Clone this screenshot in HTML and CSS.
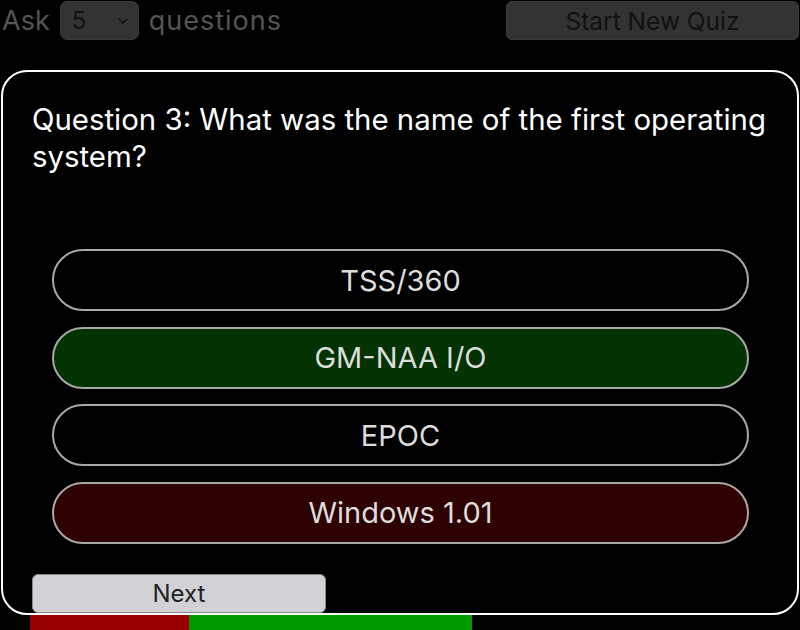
FILE: index.html
```html
<!DOCTYPE html>
<html>
<head>
<meta charset="utf-8">
<link rel="stylesheet" href="styles.css">
</head>
<body>
<div class="top">
  <div class="ask">
    <span>Ask</span>
    <div class="select"><span class="sel-val">5</span>
      <svg class="chev" width="12" height="8" viewBox="0 0 12 8"><path d="M2 2 L6 6 L10 2" fill="none" stroke="#111" stroke-width="1.6" stroke-linecap="round" stroke-linejoin="round"/></svg>
    </div>
    <span class="q-word">questions</span>
  </div>
  <button class="start">Start New Quiz</button>
</div>
<div class="card">
  <p class="question">Question 3: What was the name of the first operating system?</p>
  <div class="answers">
    <div class="answer">TSS/360</div>
    <div class="answer correct">GM-NAA I/O</div>
    <div class="answer">EPOC</div>
    <div class="answer wrong">Windows 1.01</div>
  </div>
  <button class="next">Next</button>
</div>
<div class="progress">
  <div class="seg red" style="width:159px"></div>
  <div class="seg green" style="width:283px"></div>
</div>
</body>
</html>
```
FILE: styles.css
```css
html, body {
  margin: 0;
  padding: 0;
  background: #000;
  font-family: Inter, "Noto Sans", sans-serif;
  overflow: hidden;
}
.top {
  display: flex;
  justify-content: space-between;
  align-items: flex-start;
  padding: 1px 1px 0 2px;
  height: 40px;
}
.ask {
  display: flex;
  align-items: center;
  gap: 10px;
  color: #555;
  font-size: 27px;
  height: 39px;
}
.q-word {
  letter-spacing: 1px;
}
.select {
  width: 79px;
  height: 39px;
  box-sizing: border-box;
  background: #333;
  border: 1px solid #3a3a3a;
  border-radius: 7px;
  display: flex;
  align-items: center;
  justify-content: space-between;
  padding: 0 9px 0 11px;
  color: #111;
  font-size: 24px;
}
.start {
  width: 293px;
  height: 39px;
  background: #333;
  border: 1px solid #3c3c3c;
  border-radius: 6px;
  color: #111;
  font-family: inherit;
  font-size: 24.5px;
  padding: 0;
}
.card {
  margin: 29px 1px 0 1px;
  height: 545px;
  box-sizing: border-box;
  border: 2px solid #fff;
  border-radius: 26px;
  padding: 29px 20px 0 29px;
}
.question {
  margin: 0;
  color: #fff;
  font-size: 29.4px;
  line-height: 37px;
}
.answers {
  margin: 74px 28px 0 20px;
  display: flex;
  flex-direction: column;
  gap: 15.5px;
}
.answer {
  height: 62px;
  box-sizing: border-box;
  border: 2px solid #a8a8a8;
  border-radius: 31px;
  color: #ddd;
  font-size: 29px;
  display: flex;
  align-items: center;
  justify-content: center;
}
.answer.correct { background: #033203; }
.answer.wrong { background: #2e0202; }
.next {
  margin-top: 30.5px;
  width: 294px;
  height: 39px;
  background: #d1d1d6;
  border: 1px solid #8a8a8e;
  border-radius: 6px;
  color: #222;
  font-family: inherit;
  font-size: 24px;
  padding: 0;
  display: block;
}
.progress {
  display: flex;
  margin-left: 30px;
  height: 16px;
}
.seg.red { background: #990000; }
.seg.green { background: #009900; }
```
